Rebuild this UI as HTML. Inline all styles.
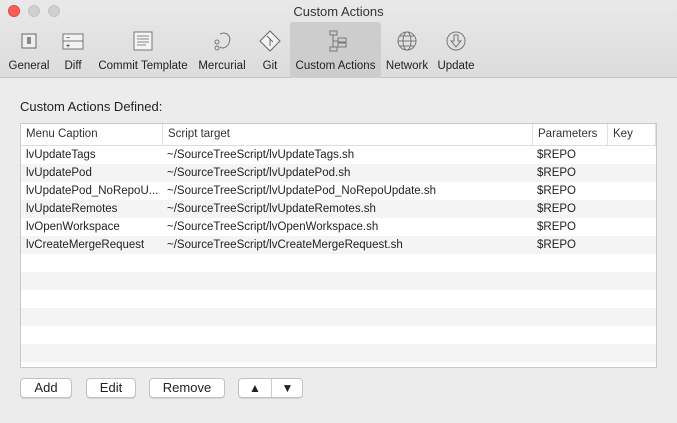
<!DOCTYPE html><html><head><style>
*{margin:0;padding:0;box-sizing:border-box}
body{width:677px;height:423px;background:#ececec;font-family:"Liberation Sans",sans-serif;font-size:12px;color:#222;position:relative;overflow:hidden}
#top{position:absolute;left:0;top:0;width:677px;height:78px;background:linear-gradient(#e9e9e9,#dcdcdc);border-bottom:1px solid #c4c4c4}
.dot{position:absolute;top:5px;width:12px;height:12px;border-radius:50%;background:#d0d0d0;border:1px solid #c2c2c2}
#title{position:absolute;top:4px;left:0;width:677px;text-align:center;font-size:13px;color:#333}
.tab{position:absolute;top:22px;height:56px;text-align:center;font-size:11.5px;color:#222}
.tab span{position:absolute;bottom:6px;left:0;right:0;white-space:nowrap}
.tab svg{position:absolute;top:8px;left:50%;margin-left:-11px}
#sel{background:#cdcdcd;border-radius:3px 3px 0 0}
#lbl{position:absolute;left:20px;top:99px;font-size:13px}
#tbl{position:absolute;left:20px;top:123px;width:637px;height:245px;border:1px solid #c8c8c8;background:#fff;overflow:hidden}
.row{height:18px;position:relative;line-height:18px;font-size:11.5px}
.row:nth-child(odd){background:#f4f4f4}
.row div{position:absolute;top:0;white-space:nowrap}
#hd{height:22px;border-bottom:1px solid #ddd;background:#fff;position:relative;line-height:21px;font-size:11.5px;color:#333}
#hd div{position:absolute;top:0;height:21px;border-left:1px solid #e0e0e0;padding-left:5px}
.btn{position:absolute;top:378px;height:20px;background:#fff;border:1px solid #c2c2c2;border-radius:4px;text-align:center;line-height:18px;font-size:13px;box-shadow:0 1px 0 #d5d5d5}
</style></head><body>
<div id="top">
<div class="dot" style="left:8px;background:#fc5f57;border-color:#df4744"></div>
<div class="dot" style="left:28px"></div><div class="dot" style="left:48px"></div>
<div id="title">Custom Actions</div>
<div class="tab" style="left:5px;width:48px"><svg width="22" height="22"><rect x="4" y="4" width="14" height="14" fill="#eee" stroke="#666"/><rect x="9" y="7" width="4" height="7" fill="#888"/></svg><span>General</span></div>
<div class="tab" style="left:55px;width:36px"><svg width="22" height="22"><rect x="1" y="4" width="20" height="15" fill="#f2f2f2" stroke="#777"/><line x1="1" y1="11" x2="21" y2="11" stroke="#777"/><text x="4" y="10" font-size="7">−</text><text x="4" y="18" font-size="7">+</text></svg><span>Diff</span></div>
<div class="tab" style="left:95px;width:96px"><svg width="22" height="22"><rect x="2" y="2" width="18" height="18" fill="#f4f4f4" stroke="#777"/><path d="M5 6h12M5 9h12M5 12h12M5 15h9" stroke="#888"/></svg><span>Commit Template</span></div>
<div class="tab" style="left:195px;width:54px"><svg width="22" height="22"><path d="M9 4c6-3 12 2 9 9-2 5-7 6-9 4" fill="none" stroke="#777"/><circle cx="6" cy="12" r="2" fill="none" stroke="#777"/><circle cx="6" cy="18" r="2" fill="none" stroke="#777"/></svg><span>Mercurial</span></div>
<div class="tab" style="left:255px;width:30px"><svg width="22" height="22"><path d="M11 1l10 10-10 10L1 11z" fill="#f4f4f4" stroke="#666"/><path d="M8 6l3 3v7M11 9l3 3" stroke="#666" fill="none"/></svg><span>Git</span></div>
<div class="tab" id="sel" style="left:290px;width:91px"><svg width="22" height="22"><rect x="5" y="1" width="7" height="4" fill="none" stroke="#777"/><rect x="5" y="17" width="7" height="4" fill="none" stroke="#777"/><rect x="13" y="8" width="8" height="4" fill="none" stroke="#777"/><rect x="13" y="13" width="8" height="4" fill="none" stroke="#777"/><path d="M8 5v12M8 11h5" stroke="#777"/></svg><span>Custom Actions</span></div>
<div class="tab" style="left:383px;width:48px"><svg width="22" height="22"><circle cx="11" cy="11" r="9" fill="none" stroke="#777"/><ellipse cx="11" cy="11" rx="4" ry="9" fill="none" stroke="#777"/><path d="M2 11h18M4 6h14M4 16h14" stroke="#777"/></svg><span>Network</span></div>
<div class="tab" style="left:433px;width:46px"><svg width="22" height="22"><circle cx="11" cy="11" r="9" fill="none" stroke="#777"/><path d="M9 5h4v6h3l-5 6-5-6h3z" fill="none" stroke="#777"/></svg><span>Update</span></div>
</div>
<div id="lbl">Custom Actions Defined:</div>
<div id="tbl">
<div id="hd"><div style="left:0;border:0">Menu Caption</div><div style="left:141px">Script target</div><div style="left:511px">Parameters</div><div style="left:586px">Key</div><div style="left:634px"></div></div>
<div>
<div class="row" style="background:#fff"><div style="left:5px">lvUpdateTags</div><div style="left:146px">~/SourceTreeScript/lvUpdateTags.sh</div><div style="left:516px">$REPO</div></div>
<div class="row" style="background:#f4f4f4"><div style="left:5px">lvUpdatePod</div><div style="left:146px">~/SourceTreeScript/lvUpdatePod.sh</div><div style="left:516px">$REPO</div></div>
<div class="row" style="background:#fff"><div style="left:5px">lvUpdatePod_NoRepoU...</div><div style="left:146px">~/SourceTreeScript/lvUpdatePod_NoRepoUpdate.sh</div><div style="left:516px">$REPO</div></div>
<div class="row" style="background:#f4f4f4"><div style="left:5px">lvUpdateRemotes</div><div style="left:146px">~/SourceTreeScript/lvUpdateRemotes.sh</div><div style="left:516px">$REPO</div></div>
<div class="row" style="background:#fff"><div style="left:5px">lvOpenWorkspace</div><div style="left:146px">~/SourceTreeScript/lvOpenWorkspace.sh</div><div style="left:516px">$REPO</div></div>
<div class="row" style="background:#f4f4f4"><div style="left:5px">lvCreateMergeRequest</div><div style="left:146px">~/SourceTreeScript/lvCreateMergeRequest.sh</div><div style="left:516px">$REPO</div></div>
<div class="row" style="background:#fff"></div><div class="row" style="background:#f4f4f4"></div><div class="row" style="background:#fff"></div><div class="row" style="background:#f4f4f4"></div><div class="row" style="background:#fff"></div><div class="row" style="background:#f4f4f4"></div>
</div></div>
<div class="btn" style="left:20px;width:52px">Add</div>
<div class="btn" style="left:86px;width:50px">Edit</div>
<div class="btn" style="left:149px;width:76px">Remove</div>
<div class="btn" style="left:238px;width:65px"><span style="position:absolute;left:0;width:33px;border-right:1px solid #ccc;font-size:12px">▲</span><span style="position:absolute;left:33px;width:31px;font-size:12px">▼</span></div>
</body></html>
